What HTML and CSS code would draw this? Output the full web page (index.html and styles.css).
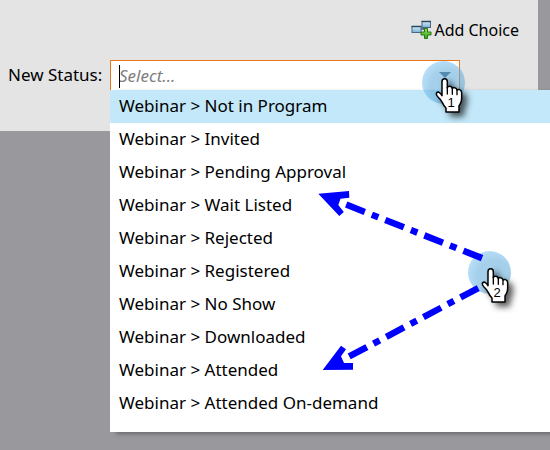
FILE: index.html
```html
<!DOCTYPE html>
<html lang="en">
<head>
<meta charset="utf-8">
<title>New Status</title>
<link rel="stylesheet" href="styles.css">
</head>
<body>
<main class="stage">
  <section class="panel">
    <div class="toolbar">
      <button class="add" type="button">
        <svg class="add-icon" viewBox="0 0 21 20" aria-hidden="true">
          <defs>
            <linearGradient id="box" x1="0" y1="0" x2="0" y2="1"><stop offset="0" stop-color="#d8edfa"/><stop offset="1" stop-color="#75afd8"/></linearGradient>
            <linearGradient id="plus" x1="0" y1="0" x2="0" y2="1"><stop offset="0" stop-color="#8ee060"/><stop offset="1" stop-color="#35a51c"/></linearGradient>
          </defs>
          <path d="M9 9H13V7" fill="none" stroke="#39566f" stroke-width="1.5"/>
          <rect x="11" y="1.500" width="8.500" height="6" fill="url(#box)" stroke="#49677e"/>
          <path d="M10.500 1.500H20" stroke="#294b66" stroke-width="1.500"/>
          <rect x="1" y="6.500" width="9" height="6" fill="url(#box)" stroke="#49677e"/>
          <path d="M.5 6.500H10.500" stroke="#294b66" stroke-width="1.500"/>
          <path d="M13.500 8.500h3v3.500h3.500v3h-3.500v3.500h-3v-3.500h-3.500v-3h3.500z" fill="url(#plus)" stroke="#26770f"/>
        </svg>
        Add Choice
      </button>
    </div>
    <div class="field">
      <label class="label" for="status">New Status:</label>
      <div class="combo">
        <input class="input" id="status" type="text" placeholder="Select..." role="combobox" aria-expanded="true" aria-controls="choices">
        <span class="caret"></span>
        <svg class="arrow" viewBox="0 0 12 6" aria-hidden="true"><path d="M0 0H12L6 6z" fill="#4c6878"/></svg>
        <ul class="menu" id="choices" role="listbox">
          <li class="option selected" role="option" aria-selected="true">Webinar &gt; Not in Program</li>
          <li class="option" role="option">Webinar &gt; Invited</li>
          <li class="option" role="option">Webinar &gt; Pending Approval</li>
          <li class="option" role="option">Webinar &gt; Wait Listed</li>
          <li class="option" role="option">Webinar &gt; Rejected</li>
          <li class="option" role="option">Webinar &gt; Registered</li>
          <li class="option" role="option">Webinar &gt; No Show</li>
          <li class="option" role="option">Webinar &gt; Downloaded</li>
          <li class="option" role="option">Webinar &gt; Attended</li>
          <li class="option" role="option">Webinar &gt; Attended On-demand</li>
        </ul>
      </div>
    </div>
  </section>
  <svg class="notes" viewBox="0 0 550 450" aria-hidden="true">
    <defs>
      <filter id="shadow" x="-50%" y="-50%" width="220%" height="220%">
        <feDropShadow dx="14" dy="12" stdDeviation="9" flood-color="#000" flood-opacity=".65"/>
      </filter>
      <radialGradient id="halo" cx=".6" cy=".6" r=".65">
        <stop offset=".6" stop-color="#5ba8d9" stop-opacity=".55"/>
        <stop offset="1" stop-color="#74c0f2" stop-opacity=".5"/>
      </radialGradient>
      <g id="hand">
        <path filter="url(#shadow)" d="M66 80Q66 71 74 71Q82 71 82 80V98Q83 94 89 94Q96 94 97 101Q99 97 104 98Q110 99 111 105Q114 102 119 104Q125 106 125 114V130Q125 139 121 146L117 153V171H78V159Q72 154 67 143Q63 134 54 126Q48 120 49 115Q51 110 57 112Q63 115 66 122Z" fill="#fff" stroke="#000" stroke-width="4.500" stroke-linejoin="round"/>
        <path d="M82 97V117M97 100V118M111 104V119" fill="none" stroke="#000" stroke-width="4" stroke-linecap="round"/>
      </g>
    </defs>
    <circle cx="443.500" cy="82.500" r="21.500" fill="url(#halo)"/>
    <circle cx="489.500" cy="272.500" r="21.500" fill="url(#halo)"/>
    <g fill="none" stroke="#00f" stroke-width="6.500" stroke-dasharray="20 7.500 7 7.500">
      <path d="M346.200 204.600L483 258.500"/>
      <path d="M349.200 356.400L479 287.700"/>
    </g>
    <g fill="#00f">
      <path d="M318.300 193.700L349 191L349.300 197.700L340.500 198.800L338.300 205L343.800 212L339.300 216z"/>
      <path d="M322.700 370L341 345.700L346 349.300L341 356.300L344 363H353V369.700z"/>
    </g>
    <use href="#hand" transform="translate(420 55) scale(.3333)"/>
    <use href="#hand" transform="translate(466 245) scale(.3333)"/>
    <text class="step" x="451" y="107">1</text>
    <text class="step" x="497" y="297">2</text>
  </svg>
</main>
</body>
</html>
```
FILE: styles.css
```css
* {
  box-sizing: border-box;
}

body {
  margin: 0;
  background: #99989d;
  color: #000;
  font: 17px/24px "Noto Sans", "Open Sans", sans-serif;
}

.stage {
  position: relative;
  min-height: 100vh;
  overflow: hidden;
}

.panel {
  margin-right: 12px;
  padding: 18px 0 41px 8px;
  background: #e4e4e4;
}

.toolbar {
  display: flex;
  justify-content: flex-end;
  padding-right: 19px;
}

.add {
  display: flex;
  align-items: center;
  gap: 2px;
  padding: 0;
  border: 0;
  background: none;
  color: inherit;
  font: inherit;
  font-size: 16px;
}

.add-icon {
  width: 21px;
  height: 20px;
}

.field {
  display: flex;
  margin-top: 18px;
}

.label {
  flex: none;
  width: 102px;
  line-height: 30px;
}

.combo {
  position: relative;
  flex: 1;
  margin-right: 78px;
}

.input {
  display: block;
  width: 100%;
  height: 30px;
  padding: 0 8px;
  border: 1px solid #e8771c;
  border-bottom: 0;
  border-radius: 0;
  outline: 0;
  background: #fff;
  font: inherit;
}

.input::placeholder {
  color: #808080;
  font-style: italic;
  opacity: 1;
}

.caret {
  position: absolute;
  top: 5px;
  left: 9px;
  width: 1px;
  height: 23px;
  background: #000;
}

.arrow {
  position: absolute;
  top: 12px;
  right: 9px;
  width: 12px;
  height: 6px;
}

.menu {
  position: absolute;
  top: 30px;
  left: 0;
  width: 100vw;
  margin: 0;
  padding: 0 0 12px;
  background: #fff;
  box-shadow: 6px 2px 4px rgba(0, 0, 0, 0.3);
  list-style: none;
}

.option {
  padding: 0 9px 1px;
  line-height: 32px;
}

.selected {
  background: #c2e8f9;
}

.notes {
  position: absolute;
  top: 0;
  left: 0;
  width: 550px;
  height: 450px;
  pointer-events: none;
}

.step {
  font: 13px "Liberation Sans", sans-serif;
  text-anchor: middle;
}
```
